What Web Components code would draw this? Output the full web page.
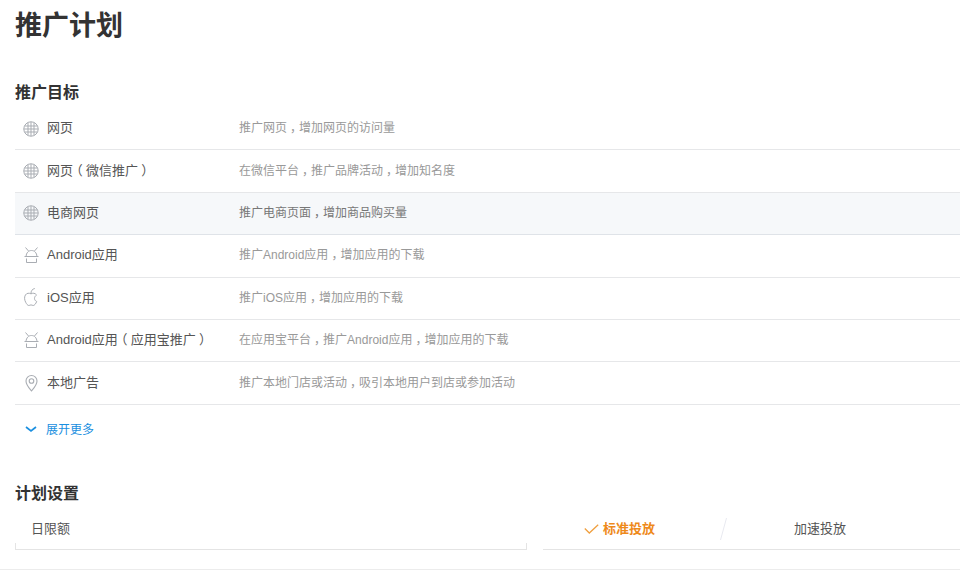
<!DOCTYPE html>
<html lang="zh">
<head>
<meta charset="utf-8">
<title>推广计划</title>
<style>
html,body{margin:0;padding:0;background:#fff;overflow:hidden;}
body{font-family:"Liberation Sans","Noto Sans CJK SC",sans-serif;color:#333;}
</style>
</head>
<body>
<plan-page>
  <section-title>推广目标</section-title>
  <target-row icon="globe" name="网页" desc="推广网页，增加网页的访问量"></target-row>
  <target-row icon="globe" name="网页（微信推广）" desc="在微信平台，推广品牌活动，增加知名度"></target-row>
  <target-row icon="globe" name="电商网页" desc="推广电商页面，增加商品购买量" active></target-row>
  <target-row icon="android" name="Android应用" desc="推广Android应用，增加应用的下载"></target-row>
  <target-row icon="apple" name="iOS应用" desc="推广iOS应用，增加应用的下载"></target-row>
  <target-row icon="android" name="Android应用（应用宝推广）" desc="在应用宝平台，推广Android应用，增加应用的下载"></target-row>
  <target-row icon="pin" name="本地广告" desc="推广本地门店或活动，吸引本地用户到店或参加活动"></target-row>
  <expand-more>展开更多</expand-more>
  <section-title class="second">计划设置</section-title>
  <budget-bar></budget-bar>
</plan-page>

<script>
const icons={
  globe:`<svg width="16" height="16" viewBox="0 0 16 16" fill="none" stroke="#a9adb3" stroke-width="1"><circle cx="8" cy="8" r="7.2"/><path d="M5 1.500v13M8 .8v14.400M11 1.500v13M1.500 5h13M.8 8h14.400M1.500 11h13"/></svg>`,
  android:`<svg style="margin-top:-2px" width="15" height="16" viewBox="0 0 15 16" fill="none" stroke="#a9adb3" stroke-width="1"><path d="M1.500 .5l3 3.500M13.500 .5l-3 3.500M2 9.500C2.300 5.800 4.500 3.500 7.500 3.500s5.200 2.300 5.500 6M.5 9.500h14M2.500 11.500v4h10v-4"/></svg>`,
  apple:`<svg style="margin-top:-2px" width="14" height="18" viewBox="0 0 14 18" fill="none" stroke="#a9adb3" stroke-width="1"><path d="M12.500 7C11 4.800 8.800 5 7 5.800 5.200 5 2.800 4.800 1.400 7 0 9.300.6 12.300 1.700 14.300c.8 1.500 1.800 3.200 3.100 3.200.9 0 1.300-.6 2.200-.6s1.300.6 2.200.6c1.300 0 2.600-1.800 3.500-4-1.300-.6-2.200-1.700-2.200-3.100 0-1.400.9-2.600 2-3.400z"/><path d="M7 5.500C6.800 3.200 8.200 1 10.800.5"/></svg>`,
  pin:`<svg width="15" height="18" viewBox="0 0 15 18" fill="none" stroke="#a9adb3" stroke-width="1.100"><path d="M7.500 17C5 14 2 10.800 2 7a5.500 5.500 0 0 1 11 0c0 3.800-3 7-5.500 10z"/><circle cx="7.500" cy="7" r="2.300"/></svg>`
}

// fullwidth punctuation sits centred in its box in the reference:
// take the half width glyph and pad it back out to one em
const puncWrap=(s)=>s.replace(/[，（）]/g,(c)=>`<span class="p">${c}</span>`)

class PlanPage extends HTMLElement{
  constructor(){
    super()
    this.attachShadow({mode:'open'}).innerHTML=`
    <style>
    :host{display:block;padding-left:15px;height:570px;box-sizing:border-box;}
    h1{margin:0;height:79px;padding-top:6px;box-sizing:border-box;font-size:27px;line-height:40px;font-weight:700;color:#333;}
    .foot{height:1px;background:#ececec;margin:19px 0 0 -15px;}
    </style>
    <h1>推广计划</h1>
    <slot></slot>
    <div class="foot"></div>`
  }
}

class SectionTitle extends HTMLElement{
  constructor(){
    super()
    this.attachShadow({mode:'open'}).innerHTML=`
    <style>
    :host{display:block;height:29px;font-size:16px;line-height:28px;font-weight:700;color:#333;}
    :host(.second){margin-top:28px;height:26px;line-height:26px;}
    </style>
    <slot></slot>`
  }
}

class TargetRow extends HTMLElement{
  constructor(){
    super()
    this.attachShadow({mode:'open'}).innerHTML=`
    <style>
    :host{display:flex;align-items:center;height:42.4px;box-sizing:border-box;border-bottom:1px solid #e6e7e9;}
    :host([active]){background:#f6f8fa;border-bottom-color:#dfe3e8;}
    .icon{width:32px;display:flex;justify-content:center;flex:none;}
    svg{display:block;}
    .name{width:192px;flex:none;font-size:13px;color:#555;white-space:nowrap;padding-bottom:4px;}
    .desc{font-size:12px;color:#999;white-space:nowrap;padding-bottom:4px;}
    :host([active]) .desc{color:#777;}
    .p{font-feature-settings:"halt";margin:0 .25em;}
    </style>
    <div class="icon"></div><div class="name"></div><div class="desc"></div>`
  }
  connectedCallback(){
    const root=this.shadowRoot
    root.querySelector('.icon').innerHTML=icons[this.getAttribute('icon')]
    root.querySelector('.name').innerHTML=puncWrap(this.getAttribute('name'))
    root.querySelector('.desc').innerHTML=puncWrap(this.getAttribute('desc'))
  }
}

class ExpandMore extends HTMLElement{
  constructor(){
    super()
    this.attachShadow({mode:'open'}).innerHTML=`
    <style>
    :host{display:flex;align-items:center;height:48px;padding-left:10px;font-size:12px;color:#1a8fe0;}
    svg{margin-right:9px;display:block;}
    </style>
    <svg width="12" height="8" viewBox="0 0 12 8" fill="none" stroke="#1a8fe0" stroke-width="1.700"><path d="M1 2l5 4 5-4"/></svg>
    <slot></slot>`
  }
}

class BudgetBar extends HTMLElement{
  constructor(){
    super()
    this.attachShadow({mode:'open'}).innerHTML=`
    <style>
    :host{display:flex;gap:16px;height:43px;font-size:13px;color:#555;}
    .left{width:512px;box-sizing:border-box;display:flex;flex-direction:column;}
    .label{flex:1;padding:8px 0 0 16px;line-height:28px;}
    .tick{height:7px;box-sizing:border-box;border:1px solid #e4e4e4;border-top:0;}
    .right{flex:1;box-sizing:border-box;border-bottom:1px solid #e4e4e4;display:flex;align-items:flex-start;padding:8px 0 0 41px;line-height:28px;}
    .on{width:136px;flex:none;display:flex;align-items:center;gap:4px;color:#ee8a1b;font-weight:700;height:28px;}
    .slash{flex:none;margin-top:3px;margin-right:67px;display:block;}
    </style>
    <div class="left"><div class="label">日限额</div><div class="tick"></div></div>
    <div class="right">
      <div class="on"><svg width="15" height="10" viewBox="0 0 15 10" fill="none" stroke="#f0a040" stroke-width="1.300"><path d="M.8 4.500l4.500 4.500L14.200.8"/></svg><span>标准投放</span></div>
      <svg class="slash" width="7" height="22" viewBox="0 0 7 22"><path d="M6.500 0L.5 22" stroke="#e8eaf0" fill="none"/></svg>
      <span>加速投放</span>
    </div>`
  }
}

customElements.define('plan-page',PlanPage)
customElements.define('section-title',SectionTitle)
customElements.define('target-row',TargetRow)
customElements.define('expand-more',ExpandMore)
customElements.define('budget-bar',BudgetBar)
</script>
</body>
</html>
